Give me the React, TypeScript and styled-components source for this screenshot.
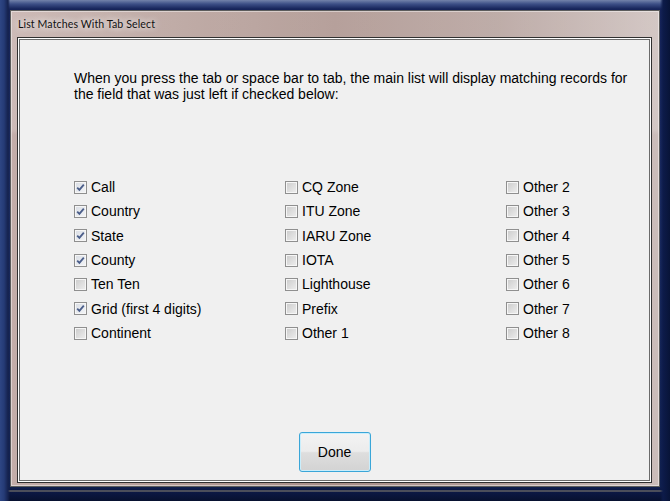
import styled, { createGlobalStyle } from "styled-components";
import { useState } from "react";

const GlobalStyle = createGlobalStyle`
  html, body {
    margin: 0;
    padding: 0;
  }
  body {
    background: #15245a;
    font-family: "Liberation Sans", Arial, sans-serif;
  }
`;

const Desktop = styled.div`
  width: 670px;
  height: 501px;
  box-sizing: border-box;
  padding: 10px 10px 14px 10px;
  display: flex;
  background:
    linear-gradient(to right, #2e4684 0, #253b76 4px, #15224e 8px, transparent 10px),
    linear-gradient(to left, #081438 0, #0d1b4a 7px, transparent 10px),
    linear-gradient(to top, #07112f 0, #0c1844 9px, #8a8470 10px, #0c1844 11px, transparent 14px),
    linear-gradient(to bottom, #7383aa 0, #3c4f86 4px, #16245a 9px, #1b2c62 40%, #10204f 100%);
`;

const Window = styled.div`
  flex: 1;
  display: flex;
  flex-direction: column;
  border: 1px solid #5c5c5c;
  padding: 0 7px 3px 6px;
  box-shadow: inset 0 0 0 1px rgba(255, 255, 255, 0.45);
  background:
    linear-gradient(to bottom, rgba(255, 255, 255, 0.16) 0, rgba(255, 255, 255, 0.16) 118px, transparent 124px),
    linear-gradient(to right, #c3ada9 0, #b49c96 25%, #a88e88 50%, #b29d98 75%, #cbbdba 100%);
`;

const TitleBar = styled.div`
  height: 26px;
  display: flex;
  align-items: center;
  padding-left: 1px;
`;

const Title = styled.span`
  font-family: Lato, "Open Sans", sans-serif;
  font-size: 10.6px;
  letter-spacing: 0.1px;
  color: #111;
  text-shadow: 0 0 6px rgba(255, 255, 255, 0.9), 0 0 10px rgba(255, 255, 255, 0.7);
`;

const ContentFrame = styled.div`
  flex: 1;
  display: flex;
  border: 1px solid #2f2f2f;
  padding: 1px;
  background: #ffffff;
`;

const Content = styled.div`
  flex: 1;
  display: flex;
  flex-direction: column;
  border: 1px solid #6b6b6b;
  background: #f0f0f0;
  padding: 30px 0 8px 0;
`;

const Upper = styled.div`
  padding-left: 54px;
`;

const Intro = styled.p`
  margin: 0;
  width: 575px;
  font-size: 14px;
  line-height: 16px;
  color: #000;
`;

const Options = styled.div`
  margin-top: 73px;
  display: grid;
  grid-template-columns: 211px 221px 1fr;
  grid-template-rows: repeat(7, 24.33px);
  grid-auto-flow: column;
`;

const Option = styled.label`
  display: flex;
  align-items: center;
  gap: 4px;
  font-family: "Liberation Sans", Arial, sans-serif;
  font-size: 14px;
  color: #000;
  cursor: default;
`;

const Box = styled.span<{ $checked: boolean }>`
  width: 13px;
  height: 13px;
  box-sizing: border-box;
  border: 1px solid #8f8f8f;
  box-shadow: inset 0 0 0 1px #f6f6f6;
  background: ${p => p.$checked
    ? "linear-gradient(135deg, #d9dde4 0, #f4f5f7 100%)"
    : "linear-gradient(135deg, #cbcbcb 0, #efefef 100%)"};
  display: flex;
  align-items: center;
  justify-content: center;
  flex-shrink: 0;
`;

const DoneButton = styled.button`
  align-self: center;
  margin-top: auto;
  width: 72px;
  height: 40px;
  box-sizing: border-box;
  border: 1px solid #3aa6d8;
  border-radius: 3px;
  box-shadow: inset 0 0 0 1px #c9eefc;
  background: linear-gradient(to bottom, #f3f3f3 0, #ececec 48%, #dedede 52%, #d3d3d3 100%);
  font-family: "Liberation Sans", Arial, sans-serif;
  font-size: 14px;
  color: #000;
  padding: 0;
`;

const columns = [
  ["Call", "Country", "State", "County", "Ten Ten", "Grid (first 4 digits)", "Continent"],
  ["CQ Zone", "ITU Zone", "IARU Zone", "IOTA", "Lighthouse", "Prefix", "Other 1"],
  ["Other 2", "Other 3", "Other 4", "Other 5", "Other 6", "Other 7", "Other 8"],
];

const initial = ["Call", "Country", "State", "County", "Grid (first 4 digits)"];

function Check({ checked }: { checked: boolean }) {
  return (
    <Box $checked={checked}>
      {checked && (
        <svg width="9" height="9" viewBox="0 0 9 9">
          <path d="M1.2 4.6 L3.4 6.9 L7.8 1.6" fill="none" stroke="#4b5e8a" strokeWidth="1.8" />
        </svg>
      )}
    </Box>
  );
}

export default function App() {
  const [checked, setChecked] = useState<string[]>(initial);

  const toggle = (name: string) => {
    setChecked(c => (c.includes(name) ? c.filter(n => n !== name) : [...c, name]));
  };

  return (
    <>
      <GlobalStyle />
      <Desktop>
        <Window>
          <TitleBar>
            <Title>List Matches With Tab Select</Title>
          </TitleBar>
          <ContentFrame>
            <Content>
              <Upper>
                <Intro>
                  When you press the tab or space bar to tab, the main list will display matching records for
                  the field that was just left if checked below:
                </Intro>
                <Options>
                  {columns.flat().map(name => (
                    <Option key={name} onClick={() => toggle(name)}>
                      <Check checked={checked.includes(name)} />
                      {name}
                    </Option>
                  ))}
                </Options>
              </Upper>
              <DoneButton>Done</DoneButton>
            </Content>
          </ContentFrame>
        </Window>
      </Desktop>
    </>
  );
}
